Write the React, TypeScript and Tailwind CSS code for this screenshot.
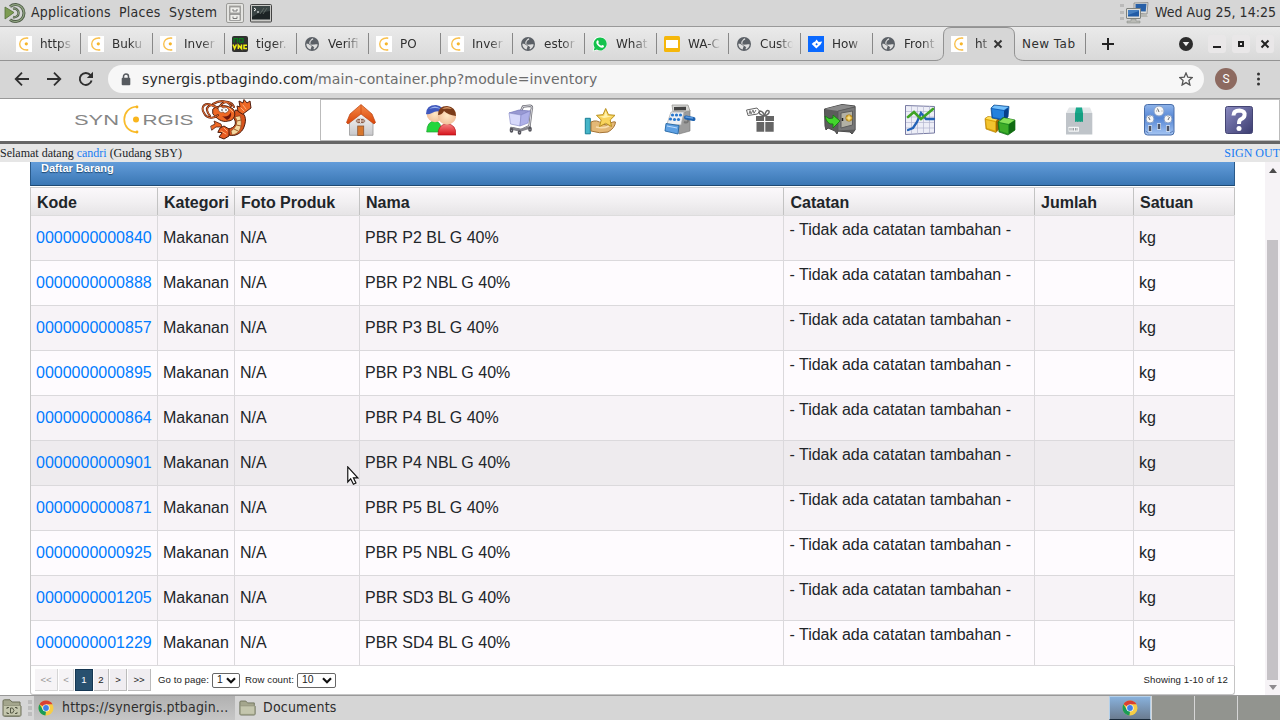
import React from 'react';

const UI_FONT = "font-['DejaVu_Sans_Condensed','DejaVu_Sans',sans-serif] [font-stretch:condensed]";

/* ---------- favicons ---------- */

function SynFavicon() {
  return (
    <svg width="16" height="16" viewBox="0 0 16 16" className="shrink-0">
      <rect width="16" height="16" fill="#fff" />
      <path d="M11.2 2C1.2 1.600 1.200 14.400 11.200 14" fill="none" stroke="#f9c14f" strokeWidth="1.400" />
      <circle cx="10.300" cy="7.800" r="1.600" fill="#f6b52a" />
      <circle cx="11.500" cy="2.100" r="0.900" fill="#f9c14f" />
      <circle cx="11.500" cy="13.900" r="0.900" fill="#f9c14f" />
    </svg>
  );
}

function GlobeFavicon() {
  return (
    <svg width="16" height="16" viewBox="0 0 16 16" className="shrink-0">
      <circle cx="8" cy="8" r="7" fill="#5b6066" />
      <path d="M8.800 2.200C9.600 2.800 9.400 3.600 8.300 4C7 4.400 7.600 5.300 6.400 5.800C7.200 6.400 8.800 5.900 9 7.200C9.100 8.200 10.300 7.900 10.700 8.800C11.400 8.300 12.600 8.200 13.700 8.600C13.400 10.900 12 12.700 10 13.400C9.300 12.800 9.600 11.600 10.500 11.300C9.600 10.800 8.900 9.900 7.800 9.700L6.600 8.600L5.200 7.400C5.500 6 5.200 5.300 6.300 4.400C6.900 3.800 7.200 2.700 8.800 2.200Z" fill="#dedede" />
      <path d="M7.500 5.500C9.800 5.100 10.300 6.300 10 8.500L7.500 8.700L6 7Z" fill="#5b6066" />
      <path d="M2.300 7.700C4 7.500 5.600 8.200 6.300 9.300C7.600 9.400 8.100 10.300 7.200 11.500L6.600 13.500C4 12.900 2.300 10.600 2.300 7.700Z" fill="#dedede" />
    </svg>
  );
}

function VncFavicon() {
  return (
    <svg width="16" height="16" viewBox="0 0 16 16" className="shrink-0">
      <rect width="16" height="16" rx="2" fill="#303030" />
      <path d="M2 6.500V2.600H5.500V6.500M7.500 2.600H11V6.200H7.500Z" fill="none" stroke="#0b7a1c" strokeWidth="1.300" />
      <path d="M1 8.500L2.600 12.500L4.400 8.500M6.300 13V9.200L9.500 12.600V8.500M15 9.200H12V12.400H15" fill="none" stroke="#f1ee10" strokeWidth="1.500" />
    </svg>
  );
}

function WhatsappFavicon() {
  return (
    <svg width="16" height="16" viewBox="0 0 16 16" className="shrink-0">
      <path d="M8 .6A7.200 7.200 0 0 0 1.800 11.500L.6 15.400L4.700 14.300A7.200 7.200 0 1 0 8 .6Z" fill="#fff" />
      <path d="M8 1.400A6.500 6.500 0 0 0 2.600 11.400L1.700 14.400L4.900 13.500A6.500 6.500 0 1 0 8 1.400Z" fill="#14c24d" />
      <path d="M5.300 4.500C6 4.100 6.300 4.500 6.800 5.900C6.900 6.400 6.300 6.700 6.200 7C7 8.500 8 9.300 9.300 9.800C9.700 9.500 10 8.900 10.400 9L12 9.800C12.200 11 11.200 11.800 10 11.700C6.700 11.200 4.500 8.400 4.300 6.500C4.300 5.600 4.700 4.900 5.300 4.500Z" fill="#fff" />
    </svg>
  );
}

function SlidesFavicon() {
  return (
    <svg width="16" height="16" viewBox="0 0 16 16" className="shrink-0">
      <rect width="16" height="16" rx="1.500" fill="#f5b70b" />
      <rect x="2" y="4" width="12" height="8" fill="#fff" />
    </svg>
  );
}

function HowFavicon() {
  return (
    <svg width="16" height="16" viewBox="0 0 16 16" className="shrink-0">
      <rect width="16" height="16" fill="#0a69ff" />
      <path d="M8.500 3.600L10.600 5.900L14.200 5.600L12.800 8.300L8.300 12.400L3.700 8L5.600 6.200L7.200 5.500Z" fill="#fff" />
      <path d="M7.300 8.200L8.600 6.900L9.900 8.200L8.600 9.400Z" fill="#0a69ff" />
    </svg>
  );
}

function ChromeLogo() {
  return (
    <svg width="16" height="16" viewBox="0 0 16 16" className="shrink-0">
      <circle cx="8" cy="8" r="7.500" fill="#f6cd46" />
      <path d="M8 8L1.500 4.250A7.500 7.500 0 0 1 14.500 4.250H8Z" fill="#d93f33" />
      <path d="M1.500 4.250L5 10L8 11.400L7.400 15.500A7.500 7.500 0 0 1 1.500 4.250Z" fill="#199b58" />
      <circle cx="8" cy="8" r="3.600" fill="#fff" />
      <circle cx="8" cy="8" r="2.900" fill="#4080e8" />
    </svg>
  );
}

/* ---------- desktop panel ---------- */

function MateLogo() {
  return (
    <svg width="22" height="22" viewBox="0 0 22 22">
      <path d="M1 5L10 10.500L1 17Z" fill="#7d9c52" stroke="#54703a" strokeWidth="0.800" />
      <path d="M6 4.600A8.500 8.500 0 1 1 6 17.600" fill="none" stroke="#4f5d48" strokeWidth="3" />
      <path d="M6 4.600A8.500 8.500 0 1 1 6 17.600" fill="none" stroke="#91a582" strokeWidth="1.200" />
      <path d="M9 6.800A4.300 4.300 0 1 1 9 15" fill="none" stroke="#4f5d48" strokeWidth="2.400" />
      <path d="M9 6.800A4.300 4.300 0 1 1 9 15" fill="none" stroke="#91a582" strokeWidth="0.900" />
    </svg>
  );
}

function CabinetIcon() {
  return (
    <svg width="18" height="20" viewBox="0 0 18 20">
      <rect x="0.500" y="0.500" width="17" height="19" rx="1.500" fill="#e4e4e1" stroke="#9b9b98" />
      <rect x="3" y="2.500" width="12" height="15" fill="#aaa9a5" />
      <rect x="4" y="4" width="10" height="6" fill="#eeeeea" stroke="#888" strokeWidth="0.700" />
      <rect x="4" y="11.500" width="10" height="6" fill="#eeeeea" stroke="#888" strokeWidth="0.700" />
      <path d="M7 6V8H11V6M7 13.500V15.500H11V13.500" fill="none" stroke="#787878" />
    </svg>
  );
}

function TerminalIcon() {
  return (
    <svg width="22" height="19" viewBox="0 0 22 19">
      <rect x="0.500" y="0.500" width="21" height="17.500" rx="1" fill="#c9c9c6" stroke="#444" />
      <rect x="2" y="2" width="18" height="13.500" fill="#1d2425" />
      <path d="M2 13L9 9L20 7V2H2Z" fill="#3a4444" />
      <path d="M4 4L6 5.500L4 7M7 8H9" stroke="#fff" strokeWidth="1" fill="none" />
      <path d="M10 10L14 4M13 10L17 4" stroke="#69736f" strokeWidth="0.800" />
    </svg>
  );
}

function NetworkIcon() {
  return (
    <svg width="30" height="22" viewBox="0 0 30 22">
      <path d="M0 2h4v3H0zM0 9h4v3H0zM0 15h4v3H0z" fill="#bababa" />
      <path d="M14 1L28 .5L27 12L14 11Z" fill="#dededb" stroke="#858585" strokeWidth="0.800" />
      <path d="M15.500 2L26.500 1.800L25.700 9.500L15.500 9.300Z" fill="#275fa7" />
      <path d="M18 12h8l2 3h-9z" fill="#b6b7b2" />
      <rect x="6.500" y="6.500" width="14" height="10" rx="0.500" fill="#dededb" stroke="#7f827e" />
      <rect x="8" y="8" width="11" height="6.500" fill="#225ca6" />
      <path d="M8 13L19 9V8H8Z" fill="#457fc1" />
      <path d="M11 17h5v2h4v2H7v-2h4z" fill="#b9bab5" stroke="#838580" strokeWidth="0.500" />
    </svg>
  );
}

function DesktopPanel() {
  return (
    <header className={`flex h-[27px] shrink-0 items-center border-b border-[#999] bg-[#d6d6d6] pl-1 text-[14px] leading-[16px] text-[#2d2d2d] ${UI_FONT}`}>
      <MateLogo />
      <span className="mb-[2px] ml-[5px] w-[88px] tracking-[0.23px] whitespace-nowrap">Applications</span>
      <span className="mb-[2px] w-[50px] tracking-[0.23px] whitespace-nowrap">Places</span>
      <span className="mb-[2px] w-[57px] tracking-[0.23px] whitespace-nowrap">System</span>
      <CabinetIcon />
      <span className="ml-[6px]"><TerminalIcon /></span>
      <span className="ml-auto"><NetworkIcon /></span>
      <span className="mb-[2px] ml-[5px] w-[125px] tracking-[0.05px] whitespace-nowrap">Wed Aug 25, 14:25</span>
    </header>
  );
}

/* ---------- browser chrome ---------- */

const tabs: { title: string; Icon: () => React.JSX.Element }[] = [
  { title: 'https', Icon: SynFavicon },
  { title: 'Buku', Icon: SynFavicon },
  { title: 'Inver', Icon: SynFavicon },
  { title: 'tiger.', Icon: VncFavicon },
  { title: 'Verifi', Icon: GlobeFavicon },
  { title: 'PO', Icon: SynFavicon },
  { title: 'Inver', Icon: SynFavicon },
  { title: 'estor', Icon: GlobeFavicon },
  { title: 'What', Icon: WhatsappFavicon },
  { title: 'WA-C', Icon: SlidesFavicon },
  { title: 'Custo', Icon: GlobeFavicon },
  { title: 'How', Icon: HowFavicon },
  { title: 'Front', Icon: GlobeFavicon },
];

function TabStrip() {
  return (
    <div className="flex h-[34px] shrink-0 items-center border-b border-[#949494] bg-linear-to-b from-[#eaeaea] to-[#d9d9d9] pl-[9px] font-['DejaVu_Sans',sans-serif] text-[12px] leading-[16px] text-[#303030]">
      {tabs.map(({ title, Icon }, i) => (
        <div
          key={i}
          className={`flex h-[21px] w-[72px] shrink-0 items-center pl-[7px] ${i < 12 ? 'border-r border-[#888]' : ''}`}
        >
          <Icon />
          <span className="ml-2 w-[33px] whitespace-nowrap [mask-image:linear-gradient(to_right,#000_55%,transparent)]">{title}</span>
        </div>
      ))}
      <div className="relative flex h-[34px] w-[76px] shrink-0 items-center pl-[6px]">
        <svg className="absolute top-0 -left-[10px]" width="90" height="35" viewBox="0 0 90 35">
          <path d="M0 35V33.500C5 33.500 8.500 31 8.500 26V8Q8.500 .5 16 .5H72Q79.500 .5 79.500 8V26C79.500 31 83 33.500 90 33.500V35Z" fill="#d6d6d6" />
          <path d="M0 33.500C5 33.500 8.500 31 8.500 26V8Q8.500 .5 16 .5H72Q79.500 .5 79.500 8V26C79.500 31 83 33.500 90 33.500" fill="none" stroke="#929292" />
        </svg>
        <span className="relative"><SynFavicon /></span>
        <span className="relative ml-2 w-[12px] whitespace-nowrap [mask-image:linear-gradient(to_right,#000_50%,#0006)]">ht</span>
        <svg className="relative ml-[6px]" width="10" height="10" viewBox="0 0 10 10"><path d="M1.500 1.500L8.500 8.500M8.500 1.500L1.500 8.500" stroke="#333" strokeWidth="1.900" /></svg>
      </div>
      <div className="flex h-[21px] w-[65px] items-center border-r border-[#888] pl-[1px]"><span className="tracking-[0.45px] whitespace-nowrap">New Tab</span></div>
      <svg className="ml-[15px]" width="14" height="14" viewBox="0 0 14 14"><path d="M7 1V13M1 7H13" stroke="#222" strokeWidth="2" /></svg>
      <svg className="ml-auto" width="14" height="14" viewBox="0 0 14 14"><circle cx="7" cy="7" r="7" fill="#2c2c2c" /><path d="M3.700 5H10.300L7 9.300Z" fill="#eee" /></svg>
      <div className="mr-[6px] ml-[15px] flex gap-[6px]">
        <svg className="rounded-[3px] bg-[#e9e7e8]" width="18" height="18"><path d="M5 12H13" stroke="#222" strokeWidth="2" /></svg>
        <svg className="rounded-[3px] bg-[#e9e7e8]" width="18" height="18"><rect x="7" y="7" width="4" height="4" fill="none" stroke="#222" strokeWidth="2" /></svg>
        <svg className="rounded-[3px] bg-[#e9e7e8]" width="18" height="18"><path d="M5.500 5.500L12.500 12.500M12.500 5.500L5.500 12.500" stroke="#222" strokeWidth="2" /></svg>
      </div>
    </div>
  );
}

function Toolbar() {
  return (
    <div className="flex h-[38px] shrink-0 items-center border-b border-[#999] bg-[#d6d6d6] pb-px pl-[14px] font-['DejaVu_Sans',sans-serif]">
      <svg width="16" height="16" viewBox="0 0 16 16"><path d="M15 8H2M8 1.700L1.700 8L8 14.300" fill="none" stroke="#2f2f2f" strokeWidth="1.800" /></svg>
      <svg className="ml-4" width="16" height="16" viewBox="0 0 16 16"><path d="M1 8H14M8 1.700L14.300 8L8 14.300" fill="none" stroke="#2f2f2f" strokeWidth="1.800" /></svg>
      <svg className="ml-4" width="16" height="16" viewBox="0 0 16 16"><path d="M13.600 9.500A6 6 0 1 1 12.500 4.200" fill="none" stroke="#2f2f2f" strokeWidth="1.900" /><path d="M15 .8V7H8.800Z" fill="#2f2f2f" /></svg>
      <div className="ml-[14px] flex h-7 w-[1096px] items-center rounded-full bg-[#f7f7f7] pl-[13px] text-[14px] text-[#2b2b2b]">
        <svg width="10" height="13" viewBox="0 0 10 13"><path d="M2.500 5V3.500A2.500 2.500 0 0 1 7.500 3.500V5" fill="none" stroke="#565a5f" strokeWidth="1.500" /><rect x="0.700" y="4.700" width="8.600" height="7.600" rx="1" fill="#565a5f" /></svg>
        <span className="ml-[11px] tracking-[0.14px] whitespace-nowrap">synergis.ptbagindo.com<span className="text-[#6c6c6c]">/main-container.php?module=inventory</span></span>
        <svg className="mr-[11px] ml-auto" width="14" height="14" viewBox="0 0 14 14"><path d="M7 1L8.800 5.200L13.300 5.500L9.900 8.500L10.900 13L7 10.600L3.100 13L4.100 8.500L.7 5.500L5.200 5.200Z" fill="none" stroke="#555" strokeWidth="1.300" /></svg>
      </div>
      <div className="ml-[11px] flex h-[22px] w-[22px] items-center justify-center rounded-full bg-[#8d6a60] font-['Roboto','Liberation_Sans',sans-serif] text-[12px] leading-none text-white">S</div>
      <svg className="ml-[19px]" width="5" height="14" viewBox="0 0 5 14"><circle cx="2.500" cy="2" r="1.500" fill="#333" /><circle cx="2.500" cy="7" r="1.500" fill="#333" /><circle cx="2.500" cy="12" r="1.500" fill="#333" /></svg>
    </div>
  );
}

/* ---------- application header ---------- */

function SynergisLogo() {
  return (
    <svg width="124" height="32" viewBox="0 0 124 32" className="font-['Liberation_Sans',sans-serif] text-[15px]">
      <text x="1" y="20.500" textLength="45" lengthAdjust="spacingAndGlyphs" fill="#868686">SYN</text>
      <path d="M64 2.700C47 3.500 47 27.500 64 28.300" fill="none" stroke="#f9bc2c" strokeWidth="1.700" />
      <circle cx="64" cy="3" r="1.400" fill="#f9b51d" />
      <circle cx="64" cy="28" r="1.400" fill="#f9b51d" />
      <circle cx="63" cy="15.500" r="3" fill="#f9b51d" />
      <text x="69.500" y="20.500" textLength="51" lengthAdjust="spacingAndGlyphs" fill="#868686">RGIS</text>
    </svg>
  );
}

function Shrimp() {
  return (
    <svg width="52" height="41" viewBox="0 0 52 41" strokeLinejoin="round" strokeLinecap="round">
      <path d="M35 11C45 13 46 20 43 28C41 34 34 38 28 36L27 30C34 29 37 24 32 18Z" fill="#d9541c" stroke="#4b1b0b" />
      <path d="M34 18C38 22 35 29 30 32L31 36C40 35 42 25 39 17Z" fill="#f5d9a0" stroke="#8b481f" strokeWidth="0.700" />
      <path d="M36 22L40 21M35.500 26L40 27M33 30L37 32" stroke="#9a5c2b" />
      <path d="M37 12L36 7L39 8L38 2L42 4L43 .5L46 4L49 2L50 9L46 12L42 15Z" fill="#ee6825" stroke="#542010" />
      <path d="M12 10C18 5 27 6 32 10C36 15 33 22 27 22C21 24 15 19 12 15Z" fill="#ee6825" stroke="#4b1b0b" />
      <path d="M14 8C4 1 -1 8 3 14C6 20 13 20 17 16M17 9C9 3 2 8 9 17M19 7C24 0 31 3 33 8M12 5C20 0 27 2 30 7" fill="none" stroke="#622612" strokeWidth="2.100" />
      <path d="M14 8C4 1 -1 8 3 14C6 20 13 20 17 16M17 9C9 3 2 8 9 17M19 7C24 0 31 3 33 8M12 5C20 0 27 2 30 7" fill="none" stroke="#e77034" strokeWidth="1" />
      <path d="M17 9Q19 6 22 9Q26 7 28 11Q25 16 22 13Q18 15 17 9Z" fill="#fff" stroke="#64301a" strokeWidth="0.600" />
      <circle cx="21" cy="11" r="0.800" fill="#222" /><circle cx="25" cy="11" r="0.800" fill="#222" />
      <path d="M21 17Q27 19 30 13Q31 19 26 21Z" fill="#6e170c" />
      <path d="M10 27L14 25L13 22L20 25L21 28L15 28L11 31Z" fill="#ee6825" stroke="#542010" strokeWidth="0.800" />
      <path d="M17 33L19 29L23 27L28 30L28 37L23 40L18 38L21 34Z" fill="#e85b21" stroke="#4b1b0b" />
      <path d="M20 32L25 35M23 29L26 32M42 6L45 10M40 9L43 12M28 9L32 13" stroke="#ffb17b" />
    </svg>
  );
}

function HomeIcon() {
  return (
    <svg width="32" height="32" viewBox="0 0 32 32">
      <defs>
        <linearGradient id="roof" x2="0" y2="1"><stop stopColor="#f58b49" /><stop offset="1" stopColor="#d94408" /></linearGradient>
        <linearGradient id="wall" x2="0" y2="1"><stop stopColor="#fff" /><stop offset="1" stopColor="#c8c8cb" /></linearGradient>
      </defs>
      <path d="M5.500 17L17 5L29 17V31.300H5.500Z" fill="url(#wall)" stroke="#999" strokeWidth="0.800" />
      <path d="M17 .5L6 10L2.500 18.500L4 20L17 10L30 20L31.500 18.500L28 10Z" fill="url(#roof)" stroke="#b94312" strokeWidth="0.700" />
      <path d="M17 1V10" stroke="#c8450d" strokeWidth="0.700" />
      <ellipse cx="16.500" cy="17" rx="4.800" ry="2.700" fill="#8b5d49" stroke="#ddd" />
      <path d="M13 17H20M16.500 14.700V19" stroke="#eadbd3" />
      <rect x="13.700" y="22" width="6" height="9.500" fill="#d7772d" stroke="#8e5735" strokeWidth="0.800" />
    </svg>
  );
}

function UsersIcon() {
  return (
    <svg width="32" height="32" viewBox="0 0 32 32">
      <defs>
        <radialGradient id="skin"><stop stopColor="#ffe8c5" /><stop offset="1" stopColor="#f2c19c" /></radialGradient>
        <linearGradient id="red" x2="0" y2="1"><stop stopColor="#f58080" /><stop offset="1" stopColor="#d7131b" /></linearGradient>
      </defs>
      <path d="M2.700 28Q3 17 11 17Q18 18 17 28Z" fill="#24d63c" stroke="#229d31" strokeWidth="0.700" />
      <circle cx="11" cy="10" r="8.300" fill="url(#skin)" />
      <path d="M2 10Q2 1 12 1Q20 2 20 10Q14 5 8 9Q4 11 2 10Z" fill="#4058bd" />
      <path d="M5 5Q11 0 17 5Q11 3 5 5Z" fill="#9db3ec" />
      <path d="M14 31Q14 20 23 20Q32 20 32 31Z" fill="url(#red)" stroke="#b61319" strokeWidth="0.700" />
      <circle cx="23" cy="11.500" r="9.200" fill="url(#skin)" />
      <path d="M14 11Q14 2 23 2Q32 3 32 12Q24 11 20 7Q18 11 14 11Z" fill="#7b3c1a" />
      <path d="M18 5Q23 1 28 5Q23 4 18 5Z" fill="#d99a6a" />
    </svg>
  );
}

function CartIcon() {
  return (
    <svg width="32" height="32" viewBox="0 0 32 32" strokeLinejoin="round">
      <path d="M17 7L19 2.500L26 1.700Q29 2 27.500 6L25.500 22L17 26L7 24" fill="none" stroke="#6e6e75" strokeWidth="2.400" />
      <path d="M17 7L19 2.500L26 1.700Q29 2 27.500 6L25.500 22L17 26L7 24" fill="none" stroke="#d8d8df" strokeWidth="1" />
      <path d="M5 9L15 6L26 7L17 11Z" fill="#9899d3" stroke="#7072b7" strokeWidth="0.700" />
      <path d="M5 9L17 11L16 22L6.500 20Z" fill="#d7d9fb" stroke="#9094cb" strokeWidth="0.700" />
      <path d="M17 11L26 7L24 19L16 22Z" fill="#aeb0e8" stroke="#8a8dcc" strokeWidth="0.700" />
      <path d="M6 24L16 26.500L27 23" stroke="#85858d" strokeWidth="2.500" fill="none" />
      <path d="M7.500 25.500v1.500M15.500 28v1M26 24.500v1.500" stroke="#55555d" strokeWidth="3.500" strokeLinecap="round" />
      <path d="M7.500 26v.6M15.500 28.200v.6M26 25v.6" stroke="#c8c8d0" />
    </svg>
  );
}

function HandStarIcon() {
  return (
    <svg width="32" height="32" viewBox="0 0 32 32" strokeLinejoin="round">
      <rect x="1.300" y="14.300" width="5" height="15.500" fill="#45b5c8" stroke="#187e95" />
      <path d="M7 18Q13 15 18 20L23 21Q29 17 31.500 18Q31 24 24 28Q16 30 7 27Z" fill="#e4b876" stroke="#a57538" />
      <path d="M12 23Q19 25 25 22" fill="none" stroke="#f8dfae" strokeWidth="1.500" />
      <path d="M21.700 4.500L24.500 10.700L31 11.300L26.200 16L27.500 22.500L21.700 19.300L15.500 22.500L17.200 16L12.500 11.300L19 10.700Z" fill="#f9d45c" stroke="#b89020" />
      <path d="M21.700 7L23.600 12L28 12.500L20 14L15.500 12.500L20 12Z" fill="#fff2ac" />
    </svg>
  );
}

function RegisterIcon() {
  return (
    <svg width="32" height="32" viewBox="0 0 32 32" strokeLinejoin="round">
      <path d="M19 9L26 6V27L15 30L14 22Z" fill="#9c9c9c" stroke="#777" strokeWidth="0.600" />
      <path d="M8 1L24 1L26 7L9 8Z" fill="#d8d8d5" stroke="#989894" strokeWidth="0.800" />
      <path d="M10 3L22 2.800V6.300L10 6.500Z" fill="#444" />
      <path d="M7 8L20 8L17 21L3 20Z" fill="#eef0f4" stroke="#aaa" strokeWidth="0.700" />
      <g fill="#2878ce"><circle cx="8.500" cy="11" r="1.600" /><circle cx="12.500" cy="11" r="1.600" /><circle cx="16.500" cy="11" r="1.600" /><circle cx="6.500" cy="15" r="1.600" /><circle cx="10.500" cy="15.500" r="1.600" /><circle cx="14.500" cy="15.500" r="1.600" /></g>
      <path d="M2 19.500L15 21.500L14 30L1 27Z" fill="#5fa1e4" stroke="#2466a4" strokeWidth="0.900" />
      <path d="M3 22L13 24" stroke="#bcdbfb" />
      <path d="M20 18Q25 20 24 14" fill="none" stroke="#777" strokeWidth="2" />
      <path d="M22 13.500L29.500 15" stroke="#1e62ae" strokeWidth="4" strokeLinecap="round" />
      <path d="M22 13L28.500 14" stroke="#609de0" strokeWidth="1.500" strokeLinecap="round" />
    </svg>
  );
}

function GiftIcon() {
  return (
    <svg width="32" height="32" viewBox="0 0 32 32">
      <path d="M12 12h8v5h-8zM21.300 12H30v5h-8.700zM12.500 18h7.700v9.700h-7.700zM21.300 18H29.700v9.700h-8.400z" fill="#656565" />
      <path d="M2.500 6L13 4L15.500 7L13.500 10L4 11.500Z" fill="#fff" stroke="#666" />
      <path d="M5 10L6 6.500L7 10L9 6L10 9.300L12 6" fill="none" stroke="#777" />
      <path d="M20.500 12Q13 10 16 7Q19 7 20.500 12Q22 5 25 7Q26 10 20.500 12Z" fill="none" stroke="#666" strokeWidth="1.400" />
    </svg>
  );
}

function SafeIcon() {
  return (
    <svg width="32" height="32" viewBox="0 0 32 32" strokeLinejoin="round">
      <path d="M.5 5L18 .5L31 2V26L28 30L26 28L14 27L13 30L11 27L4 24L2 26L1 22Z" fill="#5c5c5c" stroke="#4a4a4a" />
      <path d="M.7 5L18 .7L31 2.500L14 7Z" fill="#8b8b8b" />
      <path d="M14 7L31 3V26L14 27Z" fill="#777" stroke="#555" strokeWidth="0.700" />
      <path d="M17 9L28.500 7V21L17 24Z" fill="#b3b1a4" stroke="#5d5d5d" />
      <circle cx="25" cy="14" r="3.200" fill="#d9a92e" stroke="#a07518" strokeWidth="0.700" /><path d="M22.500 14H27.500M25 11.500V16.500" stroke="#fff1a9" />
      <path d="M18.500 14v3" stroke="#222" strokeWidth="1.500" />
      <path d="M1 12Q5 16 9 14V11L16 17L9 24V20Q3 21 1 12Z" fill="#43d52d" stroke="#167c12" strokeWidth="0.900" />
    </svg>
  );
}

function ChartIcon() {
  return (
    <svg width="32" height="32" viewBox="0 0 32 32">
      <path d="M1.500 1.500L30.500 2.500V29L1.500 30.500Z" fill="#edeef7" stroke="#777aa2" />
      <path d="M7.500 2V30M13.500 2V30M19.500 2V30M25.500 2V29M2 7.500H30M2 13H30M2 18.500H30M2 24H30" stroke="#b3b6d0" strokeWidth="0.700" />
      <path d="M4 26L9 24L13 18L17 9L22 15L30 15" fill="none" stroke="#2362b7" strokeWidth="2.300" strokeLinecap="round" />
      <path d="M4 13L10 8L17 15L23 10L29 5" fill="none" stroke="#3fa424" strokeWidth="2.600" strokeLinecap="round" />
    </svg>
  );
}

function CubesIcon() {
  return (
    <svg width="32" height="32" viewBox="0 0 32 32" strokeLinejoin="round">
      <path d="M1 14.500L4 12.500L15 14V25L12 28.500L2 25Z" fill="#dda309" stroke="#b68108" strokeWidth="0.700" />
      <path d="M1.500 14.700L12 17L15 14L4 12.700Z" fill="#ffdf55" /><path d="M12 17L15 14V25L12 28Z" fill="#9e6805" /><path d="M2 16L11 18V26.500L3 24Z" fill="#f3c42f" />
      <path d="M7 4L10 1L25 2.500L24 13L20 16.500L8 14Z" fill="#1262bd" stroke="#094789" strokeWidth="0.700" />
      <path d="M7.500 4L10.500 1.500L24.500 3L20 6Z" fill="#74c0fb" /><path d="M8 5L20 7V15L9 13Z" fill="#2381dd" /><path d="M20 7L24 4V13L20 16Z" fill="#073f8b" />
      <path d="M14 18L19 13.500L31 16V26L24 31L15 28Z" fill="#229021" stroke="#176b18" strokeWidth="0.700" />
      <path d="M15 18L20 14L30.500 16L25 20Z" fill="#86e05a" /><path d="M15 19L24 21V29.500L16 27Z" fill="#3fae29" /><path d="M25 20L31 16.500V26L25 30Z" fill="#116b12" />
    </svg>
  );
}

function PackageIcon() {
  return (
    <svg width="32" height="32" viewBox="0 0 32 32">
      <path d="M5 3.500H26L28.300 9H2Z" fill="#e4e7e9" />
      <path d="M2 9H28.300V30.500H2Z" fill="#bfc4c9" />
      <path d="M12 3.500H18L19 9V18L17.700 17L16.500 18L15 17L13.700 18L12.500 17L11 18V9Z" fill="#18a98b" />
      <path d="M11 9H19V18H11Z" fill="#139477" opacity=".5" />
      <rect x="4.500" y="22.700" width="10.500" height="5" rx="0.600" fill="#f4f5f6" />
      <path d="M6 24v2.500M8 24v2.500M9.500 24v2.500M11.500 24v2.500M13 24v2.500" stroke="#9ba0a5" />
    </svg>
  );
}

function GaugesIcon() {
  return (
    <svg width="32" height="32" viewBox="0 0 32 32">
      <defs><linearGradient id="gauge" x2="0" y2="1"><stop stopColor="#8fb4ea" /><stop offset=".45" stopColor="#5485d4" /><stop offset="1" stopColor="#a6c6f3" /></linearGradient></defs>
      <rect x="0.500" y="0.500" width="29.500" height="30.500" rx="3" fill="url(#gauge)" stroke="#486da9" />
      <g fill="#f7f7f7" stroke="#88a1c7"><circle cx="15" cy="7" r="5" /><circle cx="6" cy="15" r="4" /><circle cx="24" cy="15" r="4" /></g>
      <path d="M15 8L13.500 4.500M6 16L4.500 13M24 16L25.500 13" stroke="#444" strokeWidth="0.800" />
      <path d="M12 7H13M17.500 7H18.500M6 12V13M24 12V13" stroke="#999" />
      <path d="M6 21v7M15 19v7M24 21v7" stroke="#c4d6ef" strokeWidth="4" />
      <path d="M6 22v5M15 20v5M24 22v5" stroke="#4d5364" strokeWidth="2.400" />
      <path d="M1.500 27l3 2M29 27l-3 2" stroke="#5b7db9" />
    </svg>
  );
}

function HelpIcon() {
  return (
    <svg width="32" height="32" viewBox="0 0 32 32">
      <defs><linearGradient id="help" x2="1" y2="1"><stop stopColor="#8a8ac0" /><stop offset="1" stopColor="#3b3c70" /></linearGradient></defs>
      <rect x="1.500" y="2.500" width="27" height="27" rx="2" fill="url(#help)" stroke="#444573" />
      <path d="M9.500 11.500Q9.500 6.500 15.500 6.500Q21.500 7 20.500 11.500Q20 14 16.500 15.500Q15 16.500 15 20" fill="none" stroke="#fff" strokeWidth="4" />
      <circle cx="15" cy="24.500" r="2.500" fill="#fff" />
    </svg>
  );
}

const navIcons = [HomeIcon, UsersIcon, CartIcon, HandStarIcon, RegisterIcon, GiftIcon, SafeIcon, ChartIcon, CubesIcon, PackageIcon, GaugesIcon, HelpIcon];

function AppHeader() {
  return (
    <>
      <div className="flex h-[45px] shrink-0 border-b-[3px] border-[#666] bg-white">
        <div className="flex w-[320px] items-start gap-[4px] pl-[73px]">
          <span className="mt-[5px]"><SynergisLogo /></span>
          <Shrimp />
        </div>
        <nav className="grid h-[42px] w-[960px] grid-cols-12 pt-[5px] shadow-[inset_0_0_0_1px_#bbb]">
          {navIcons.map((Icon, i) => (
            <a key={i} className="flex justify-center"><Icon /></a>
          ))}
        </nav>
      </div>
      <div className="flex h-[18px] shrink-0 items-center justify-between bg-[#e6e6e6] font-['Liberation_Serif',serif] text-[12px] leading-none text-[#212529]">
        <span>Selamat datang <a className="text-[#167cf3]">candri</a> (Gudang SBY)</span>
        <a className="text-[#167cf3]">SIGN OUT</a>
      </div>
    </>
  );
}

/* ---------- table ---------- */

const rows: [string, string][] = [
  ['0000000000840', 'PBR P2 BL G 40%'],
  ['0000000000888', 'PBR P2 NBL G 40%'],
  ['0000000000857', 'PBR P3 BL G 40%'],
  ['0000000000895', 'PBR P3 NBL G 40%'],
  ['0000000000864', 'PBR P4 BL G 40%'],
  ['0000000000901', 'PBR P4 NBL G 40%'],
  ['0000000000871', 'PBR P5 BL G 40%'],
  ['0000000000925', 'PBR P5 NBL G 40%'],
  ['0000000001205', 'PBR SD3 BL G 40%'],
  ['0000000001229', 'PBR SD4 BL G 40%'],
];
const headings = ['Kode', 'Kategori', 'Foto Produk', 'Nama', 'Catatan', 'Jumlah', 'Satuan'];
const COLS = 'grid grid-cols-[127px_77px_125px_424px_251px_99px_101px]';

function Select({ value, className }: { value: string; className: string }) {
  return (
    <span className={`flex h-[15px] items-center justify-between rounded-[2px] border border-[#666] bg-white pr-[3px] pl-1 text-[10.4px] ${className}`}>
      {value}
      <svg width="10" height="7" viewBox="0 0 10 7"><path d="M1 1.200L5 5.200L9 1.200" fill="none" stroke="#111" strokeWidth="2.200" /></svg>
    </span>
  );
}

const pageButton = 'flex h-[22px] items-center justify-center border-r border-b border-[#bbb] bg-[#f0edf1]';
const pageButtonDisabled = 'flex h-[22px] items-center justify-center border-r border-b border-[#d5d5d5] bg-[#f6f4f6] text-[#999]';

function Pager() {
  return (
    <div className="flex h-[29px] items-center rounded-b-[3px] border border-t-0 border-[#c5c5c5] bg-white pl-1 text-[9.6px] leading-none text-[#222]">
      <div className="flex gap-[1px]">
        <span className={`${pageButtonDisabled} w-[23px]`}>&lt;&lt;</span>
        <span className={`${pageButtonDisabled} w-[15px]`}>&lt;</span>
        <span className="flex h-[22px] w-[18px] items-center justify-center border border-[#153652] bg-[#28506f] text-white">1</span>
        <span className={`${pageButton} w-[15px]`}>2</span>
        <span className={`${pageButton} w-[17px]`}>&gt;</span>
        <span className={`${pageButton} w-[23px]`}>&gt;&gt;</span>
      </div>
      <span className="ml-[7px] w-[54px] tracking-[0.08px] whitespace-nowrap">Go to page:</span>
      <Select value="1" className="w-[28px]" />
      <span className="ml-[5px] w-[52px] tracking-[0.1px] whitespace-nowrap">Row count:</span>
      <Select value="10" className="w-[39px]" />
      <span className="mr-[6px] ml-auto tracking-[0.1px]">Showing 1-10 of 12</span>
    </div>
  );
}

function ItemTable() {
  return (
    <main className="ml-[30px] w-[1205px] font-['Liberation_Sans',Arial,sans-serif] text-[16px] text-[#212529]">
      <div className="h-[24px] border-x border-b border-[#2a5a8a] border-b-[#1f4a73] bg-linear-to-b from-[#629cda] to-[#3a77b4] pl-[10px] text-[11px] leading-[13px] font-bold text-white [text-shadow:0_1px_1px_#1d4871]">Daftar Barang</div>
      <div className="mt-px border-l border-[#c8c8c8]">
        <div className={`${COLS} h-[29px] border-t border-b border-[#d0d0d0] border-b-[#dddcdd] bg-linear-to-b from-[#fbf8fb] via-[#f2f0f2] to-[#e6e4e6] font-bold`}>
          {headings.map((h) => (
            <div key={h} className={`border-r border-[#c3c3c3] pt-[3px] leading-[24px] whitespace-nowrap ${h === 'Catatan' ? 'pl-[6.500px]' : 'pl-[6px]'}`}>{h}</div>
          ))}
        </div>
        {rows.map(([code, name], i) => {
          const bg = i === 5 ? 'bg-[#eeebee]' : i % 2 ? 'bg-[#fefbfe]' : 'bg-[#f7f3f7]';
          const cell = 'border-r border-[#dbd9dc] pl-[5px] pt-[10px] leading-[24px] whitespace-nowrap';
          return (
            <div key={code} className={`${COLS} h-[45px] border-b border-[#dbd9dc] ${bg}`}>
              <div className={`${cell} text-[#007bff]`}>{code}</div>
              <div className={cell}>Makanan</div>
              <div className={cell}>N/A</div>
              <div className={cell}>{name}</div>
              <div className="border-r border-[#dbd9dc] pt-[2px] pl-[5.500px] leading-[24px] whitespace-nowrap">- Tidak ada catatan tambahan -</div>
              <div className={cell} />
              <div className={cell}>kg</div>
            </div>
          );
        })}
      </div>
      <Pager />
    </main>
  );
}

function Scrollbar() {
  return (
    <div className="ml-auto flex w-[15px] flex-col items-center bg-[#f6f3f6]">
      <svg className="mt-[6px]" width="8" height="5"><path d="M0 5L4 0L8 5Z" fill="#4b4b4b" /></svg>
      <div className="mt-[67px] h-[440px] w-[11px] bg-[#c5c2c6]" />
      <svg className="mt-[5px]" width="8" height="5"><path d="M0 0L4 5L8 0Z" fill="#8e8b8f" /></svg>
    </div>
  );
}

function FolderIcon({ desktop = false }: { desktop?: boolean }) {
  return (
    <svg width={desktop ? 20 : 17} height={desktop ? 18 : 16} viewBox="0 0 20 18">
      <path d="M1 16V2Q1 .8 2.500 .8H8L10 3H18V6L19 7V16Q19 17.300 17.500 17.300H2.500Q1 17.300 1 16Z" fill="#a4a68d" stroke="#6c6f58" />
      <path d="M1.500 6.500H18.500V16.500H1.500Z" fill="#c4c6ad" stroke="#8f927a" strokeWidth="0.800" />
      {desktop && <path d="M5 10V8.500H7M13 8.500H15V10M15 13V14.500H13M7 14.500H5V13M8.500 9H10.500L12 11.500L10.500 14H8.500Z" fill="none" stroke="#555845" />}
    </svg>
  );
}

function Taskbar() {
  return (
    <footer className={`flex h-[25px] shrink-0 items-center border-t border-[#999] bg-[#d6d6d6] pl-[2px] text-[14px] leading-[16px] text-[#2d2d2d] ${UI_FONT}`}>
      <FolderIcon desktop />
      <svg className="ml-[6px]" width="4" height="16"><path d="M0 0h4v4H0zM0 6h4v4H0zM0 12h4v4H0z" fill="#bdbdbd" /></svg>
      <div className="ml-[2px] flex h-6 w-[201px] items-center bg-linear-to-b from-[#b1b1b1] to-[#c6c6c6] pl-[4px]">
        <ChromeLogo />
        <span className="mb-[2px] ml-[8px] tracking-[0.16px] whitespace-nowrap">https://synergis.ptbagin...</span>
      </div>
      <div className="ml-[4px] flex items-center"><FolderIcon /><span className="mb-[2px] ml-[7px] tracking-[0.2px]">Documents</span></div>
      <div className="ml-auto flex h-6 gap-px bg-[#d6d6d6]">
        <div className="flex w-[42px] items-center justify-center border border-[#b4d0ea] border-b-[#1b2b3b] bg-linear-to-b from-[#88b1dc] to-[#6b7c90]"><ChromeLogo /></div>
        <div className="w-[42px] bg-[#92948f]" />
        <div className="w-[42px] bg-[#92948f]" />
        <div className="w-[42px] bg-[#92948f]" />
      </div>
    </footer>
  );
}

export default function App() {
  return (
    <div className="relative flex h-[720px] w-[1280px] flex-col overflow-hidden bg-white">
      <DesktopPanel />
      <TabStrip />
      <Toolbar />
      <AppHeader />
      <div className="flex h-[533px] shrink-0">
        <ItemTable />
        <Scrollbar />
      </div>
      <Taskbar />
      <svg className="absolute top-[466px] left-[346px]" width="13" height="20" viewBox="0 0 14 22">
        <path d="M1.800 1V17.500L5 14L8 20L10.800 18.700L8 13H12.800Z" fill="#fff" stroke="#111" strokeWidth="1.300" />
      </svg>
    </div>
  );
}
